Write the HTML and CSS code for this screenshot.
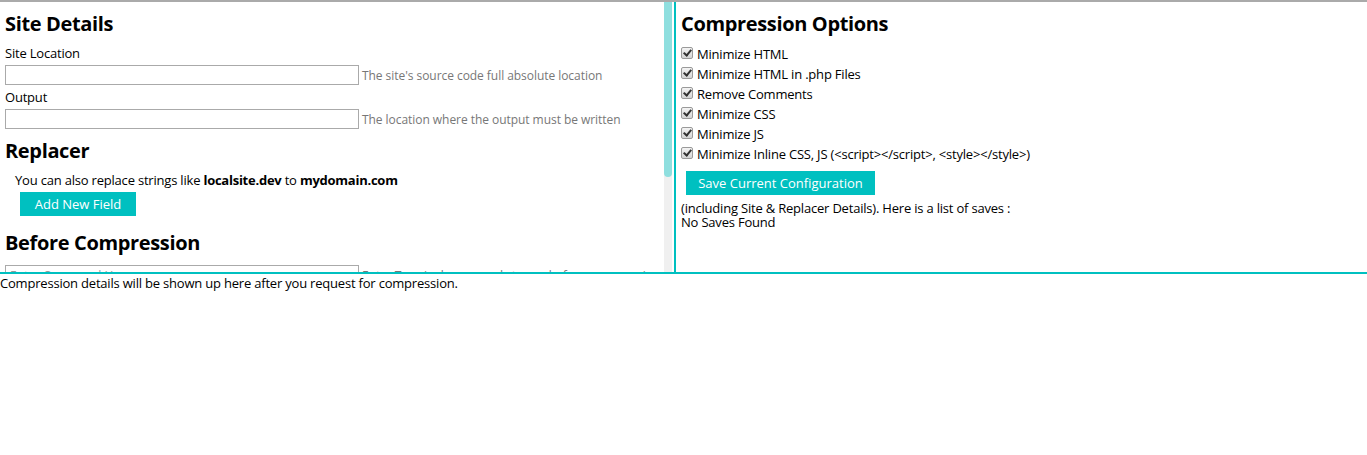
FILE: index.html
```html
<!DOCTYPE html>
<html>
<head>
<meta charset="utf-8">
<link rel="stylesheet" href="styles.css">
</head>
<body>
<div class="page">
  <div class="panes">
    <div class="left">
      <div class="left-content">
        <h2 class="title">Site Details</h2>
        <div class="label">Site Location</div>
        <div class="field"><input class="input" type="text"><span class="hint">The site's source code full absolute location</span></div>
        <div class="label">Output</div>
        <div class="field"><input class="input" type="text"><span class="hint">The location where the output must be written</span></div>
        <h2 class="title title-sm">Replacer</h2>
        <p class="note">You can also replace strings like <b>localsite.dev</b> to <b>mydomain.com</b></p>
        <button class="btn btn-add">Add New Field</button>
        <h2 class="title title-before">Before Compression</h2>
        <div class="field"><input class="input" type="text" placeholder="Enter Command Here"><span class="hint">Enter Terminal commands to run before compression starts</span></div>
        <h2 class="title title-sm">After Compression</h2>
        <div class="field"><input class="input" type="text" placeholder="Enter Command Here"><span class="hint">Enter Terminal commands to run after compression is done</span></div>
      </div>
      <div class="scrollbar"><div class="thumb"></div></div>
    </div>
    <div class="right">
      <h2 class="title">Compression Options</h2>
      <ul class="options">
        <li class="option"><input class="check" type="checkbox" checked><span>Minimize HTML</span></li>
        <li class="option"><input class="check" type="checkbox" checked><span>Minimize HTML in .php Files</span></li>
        <li class="option"><input class="check" type="checkbox" checked><span>Remove Comments</span></li>
        <li class="option"><input class="check" type="checkbox" checked><span>Minimize CSS</span></li>
        <li class="option"><input class="check" type="checkbox" checked><span>Minimize JS</span></li>
        <li class="option"><input class="check" type="checkbox" checked><span>Minimize Inline CSS, JS (&lt;script&gt;&lt;/script&gt;, &lt;style&gt;&lt;/style&gt;)</span></li>
      </ul>
      <button class="btn btn-save">Save Current Configuration</button>
      <div class="saves">(including Site &amp; Replacer Details). Here is a list of saves :<br>No Saves Found</div>
    </div>
  </div>
  <div class="status">Compression details will be shown up here after you request for compression.</div>
</div>
</body>
</html>
```

FILE: styles.css
```css
html, body {
  margin: 0;
  padding: 0;
  background: #fff;
}
body {
  font-family: "Open Sans", "DejaVu Sans", sans-serif;
  font-size: 13px;
  letter-spacing: -0.2px;
  color: #000;
}
.page {
  border-top: 2px solid #aaaaaa;
}
.panes {
  display: flex;
  height: 270px;
  border-bottom: 2px solid #00c0c0;
}
.left {
  display: flex;
  width: 672px;
  margin-right: 2px;
  flex: none;
}
.left-content {
  flex: 1;
  min-width: 0;
  overflow: hidden;
  padding-left: 5px;
}
.scrollbar {
  width: 8px;
  flex: none;
  background: #f0f0f0;
}
.thumb {
  height: 175px;
  background: #8fdfdf;
  border-radius: 0 0 4px 4px;
}
.right {
  flex: 1;
  border-left: 2px solid #00c0c0;
  padding-left: 5px;
}
.title {
  margin: 10px 0 9px;
  font-size: 20px;
  line-height: 24px;
  font-weight: bold;
  letter-spacing: -0.35px;
}
.title-sm {
  margin: 10px 0 9px;
}
.title-before {
  margin: 15px 0 10px;
}
.label {
  line-height: 16px;
  margin-bottom: 4px;
}
.field {
  display: flex;
  align-items: center;
  height: 20px;
  margin-bottom: 4px;
}
.input {
  box-sizing: border-box;
  flex: none;
  width: 354px;
  height: 20px;
  margin: 0;
  border: 1px solid #aaaaaa;
  padding: 0 4px;
  font: inherit;
  font-size: 12px;
  outline: none;
}
.input::placeholder {
  color: #999;
}
.hint {
  margin-left: 3px;
  color: #777;
  font-size: 12px;
  letter-spacing: -0.05px;
  white-space: nowrap;
}
.note {
  margin: 0 0 4px 10px;
  line-height: 16px;
}
.note b {
  letter-spacing: -0.25px;
}
.btn {
  display: block;
  height: 24px;
  border: none;
  background: #00c0c0;
  color: #fff;
  font: inherit;
  font-size: 13px;
  padding: 0;
  cursor: pointer;
}
.btn-add {
  width: 116px;
  margin-left: 15px;
}
.btn-save {
  width: 189px;
  margin: 7px 0 0 5px;
}
.options {
  list-style: none;
  margin: 0;
  padding: 0;
}
.option {
  display: flex;
  align-items: center;
  height: 20px;
  margin-top: -1px;
  margin-bottom: 1px;
}
.check {
  appearance: none;
  -webkit-appearance: none;
  box-sizing: border-box;
  width: 12px;
  height: 12px;
  margin: 0 4px 2px 0;
  border: 1px solid #9a9a9a;
  border-radius: 2px;
  background: linear-gradient(#f4f4f4, #d4d4d4);
  position: relative;
}
.check:checked::after {
  content: "";
  position: absolute;
  left: 3px;
  top: 0px;
  width: 3px;
  height: 6px;
  border: solid #333;
  border-width: 0 2px 2px 0;
  transform: rotate(40deg);
}
.saves {
  margin-top: 6px;
  line-height: 14px;
}
.status {
  line-height: 18px;
}
```
